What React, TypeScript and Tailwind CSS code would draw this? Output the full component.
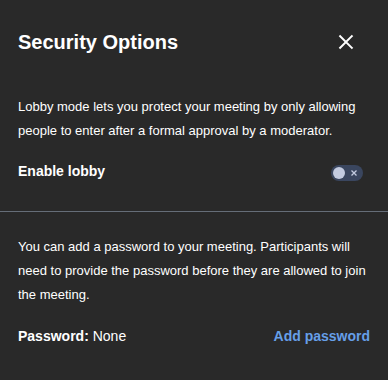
import React, { useState } from 'react';

function CloseIcon() {
  return (
    <svg width="20" height="20" viewBox="0 0 24 24" fill="none" stroke="currentColor" strokeWidth="2.4" strokeLinecap="square">
      <path d="M5 5l14 14M19 5L5 19" />
    </svg>
  );
}

function LobbySwitch({ checked, onChange }: { checked: boolean; onChange: (v: boolean) => void }) {
  return (
    <button
      type="button"
      onClick={() => onChange(!checked)}
      className="relative mt-[6px] flex h-4 w-8 shrink-0 items-center rounded-full bg-[#3a465f]"
    >
      <span className="absolute left-[2px] top-[2px] h-3 w-3 rounded-full bg-[#c3cbe0]" />
      <svg className="absolute left-[20px] top-[5px]" width="6" height="6" viewBox="0 0 6 6" stroke="#c3cbe0" strokeWidth="1.3">
        <path d="M0.5 0.5l5 5M5.5 0.5l-5 5" />
      </svg>
    </button>
  );
}

export default function App() {
  const [lobby, setLobby] = useState(false);

  return (
    <div className="h-[380px] w-[388px] bg-[#292929] text-white font-[family-name:Liberation_Sans,Arial,sans-serif]">
      {/* Header */}
      <div className="flex items-center justify-between pl-[18px] pr-[32px] pt-[28px]">
        <h1 className="text-[20px] font-bold leading-[28px]">Security Options</h1>
        <button type="button" className="text-white">
          <CloseIcon />
        </button>
      </div>

      {/* Lobby */}
      <div className="px-[18px] pt-[39px] pb-[28px]">
        <p className="text-[13px] leading-[24px]">
          Lobby mode lets you protect your meeting by only allowing people to enter after a formal approval by a moderator.
        </p>
        <div className="mt-[16px] flex items-start justify-between pr-[7px]">
          <span className="text-[14px] font-bold leading-[24px]">Enable lobby</span>
          <LobbySwitch checked={lobby} onChange={setLobby} />
        </div>
      </div>

      <div className="h-px w-full bg-[#656d78]" />

      {/* Password */}
      <div className="px-[18px] pt-[23px]">
        <p className="text-[13px] leading-[24px]">
          You can add a password to your meeting. Participants will need to provide the password before they are allowed to join the meeting.
        </p>
        <div className="mt-[17px] flex items-center justify-between">
          <span className="text-[14px] leading-[24px]">
            <span className="font-bold">Password:</span> None
          </span>
          <button type="button" className="text-[14px] font-bold leading-[24px] text-[#669fe8]">
            Add password
          </button>
        </div>
      </div>
    </div>
  );
}
